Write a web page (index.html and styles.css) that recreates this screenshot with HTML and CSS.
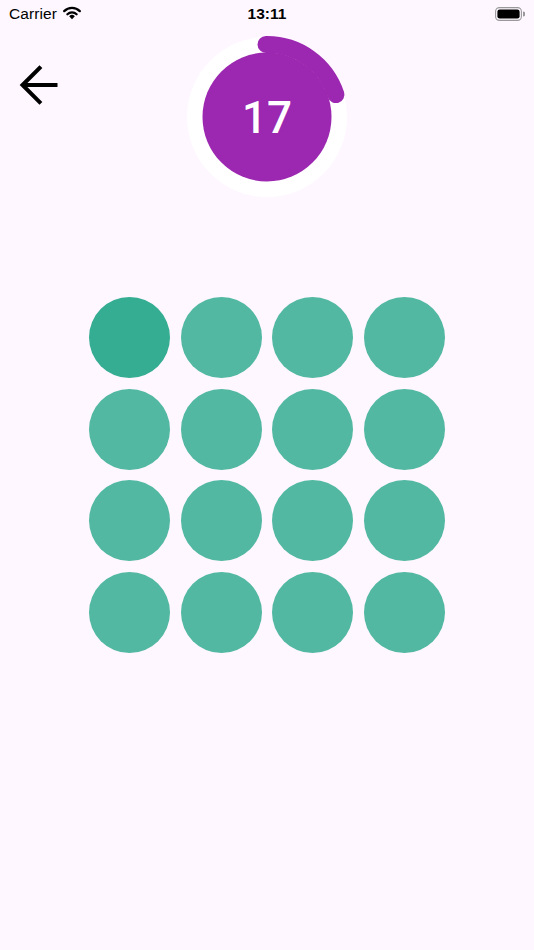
FILE: index.html
```html
<!DOCTYPE html>
<html>
<head>
<meta charset="utf-8">
<link rel="stylesheet" href="styles.css">
</head>
<body>
<div class="status">
  <div class="status-left">
    <span class="carrier">Carrier</span>
    <svg class="wifi" width="20" height="14" viewBox="0 0 20 14">
      <path d="M10 13.2 L7.2 10.2 A4 4 0 0 1 12.8 10.2 Z" fill="#000"/>
      <path d="M5.4 8.3 A6.6 6.6 0 0 1 14.6 8.3" stroke="#000" stroke-width="2.3" fill="none" stroke-linecap="round"/>
      <path d="M2.2 5.1 A11 11 0 0 1 17.8 5.1" stroke="#000" stroke-width="2.3" fill="none" stroke-linecap="round"/>
    </svg>
  </div>
  <div class="time">13:11</div>
  <div class="status-right">
    <svg width="30" height="14" viewBox="0 0 30 14">
      <rect x="0.6" y="0.6" width="25.8" height="12.8" rx="3.8" fill="none" stroke="#999" stroke-width="1.1"/>
      <rect x="2.4" y="2.4" width="22.2" height="9.2" rx="2.3" fill="#000"/>
      <path d="M28 4.6 A2.2 2.2 0 0 1 28 9.4 Z" fill="#999"/>
    </svg>
  </div>
</div>
<div class="header">
  <div class="back">
    <svg width="60" height="60" viewBox="0 0 60 60">
      <path d="M55.5 30 H 24 M39.5 13 L 22.5 30 L 39.5 47" stroke="#000" stroke-width="4" fill="none" stroke-linecap="square" stroke-linejoin="miter"/>
    </svg>
  </div>
  <div class="timer">
    <svg width="164" height="164" viewBox="0 0 164 164">
      <circle cx="82" cy="82" r="80" fill="#FFFFFF"/>
      <circle cx="82" cy="82" r="64.5" fill="#9C27B0"/>
      <path d="M81 9.5 A72.5 72.5 0 0 1 150.95 59.6" stroke="#9C27B0" stroke-width="17" fill="none" stroke-linecap="round"/>
    </svg>
    <span class="count">17</span>
  </div>
  <div></div>
</div>
<div class="grid">
  <div class="dot active"></div><div class="dot"></div><div class="dot"></div><div class="dot"></div>
  <div class="dot"></div><div class="dot"></div><div class="dot"></div><div class="dot"></div>
  <div class="dot"></div><div class="dot"></div><div class="dot"></div><div class="dot"></div>
  <div class="dot"></div><div class="dot"></div><div class="dot"></div><div class="dot"></div>
</div>
</body>
</html>
```
FILE: styles.css
```css
html, body {
  margin: 0;
  padding: 0;
  background: #FEF7FF;
  width: 534px;
  height: 950px;
  overflow: hidden;
  font-family: "Liberation Sans", Arial, sans-serif;
}
.status {
  height: 28px;
  display: grid;
  grid-template-columns: 1fr auto 1fr;
  align-items: center;
  padding: 0 9px;
}
.status-left {
  display: flex;
  align-items: center;
  gap: 5px;
}
.carrier {
  font-size: 15.5px;
  color: #000;
  letter-spacing: 0.1px;
}
.wifi { margin-top: -3px; }
.time {
  font-size: 15.5px;
  font-weight: bold;
  color: #000;
}
.status-right {
  display: flex;
  justify-content: flex-end;
}
.header {
  display: grid;
  grid-template-columns: 1fr auto 1fr;
  height: 170px;
  padding-top: 7px;
  box-sizing: border-box;
}
.back {
  padding-top: 20px;
}
.back svg { display: block; }
.timer {
  position: relative;
  width: 164px;
  height: 164px;
}
.timer svg { display: block; }
.count {
  position: absolute;
  left: 0;
  right: 0;
  top: 0;
  bottom: 0;
  display: flex;
  align-items: center;
  justify-content: center;
  font-family: Roboto, "Liberation Sans", sans-serif;
  font-weight: 500;
  font-size: 44px;
  color: #FFFFFF;
  padding-top: 1px;
}
.grid {
  margin: 99px auto 0;
  width: 356px;
  display: grid;
  grid-template-columns: repeat(4, 81px);
  grid-auto-rows: 81px;
  column-gap: 10.6px;
  row-gap: 10.6px;
}
.dot {
  border-radius: 50%;
  background: #52B8A2;
}
.dot.active {
  background: #35AD92;
}
```
